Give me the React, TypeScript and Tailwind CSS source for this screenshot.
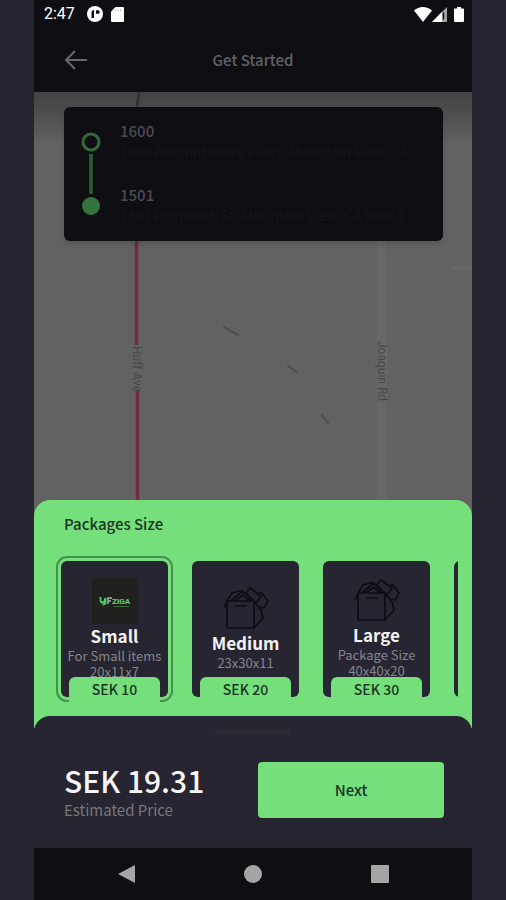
import { useState } from 'react';

interface PackageSize {
  name: string;
  lines: string[];
  price: string;
  logo?: boolean;
}

const PACKAGES: PackageSize[] = [
  { name: 'Small', lines: ['For Small items', '20x11x7'], price: 'SEK 10', logo: true },
  { name: 'Medium', lines: ['23x30x11'], price: 'SEK 20' },
  { name: 'Large', lines: ['Package Size', '40x40x20'], price: 'SEK 30' },
];

function StatusBar() {
  return (
    <div className="flex h-7 items-center justify-between pl-2.5 pr-2 text-white">
      <div className="flex items-center gap-3">
        <span className="font-[Roboto] text-base">2:47</span>
        <svg width="16" height="16" viewBox="0 0 16 16">
          <circle cx="8" cy="8" r="8" fill="#fff" />
          <path d="M4.5 12V6.5A2.5 2.5 0 0 1 7 4v8zM9 4.2h2a1.7 1.7 0 0 1 0 3.6H9z" fill="#0f0e13" />
        </svg>
        <svg width="13" height="15" viewBox="0 0 13 15" className="-ml-1">
          <path d="M4.5 0H12a1 1 0 0 1 1 1v13a1 1 0 0 1-1 1H1a1 1 0 0 1-1-1V4.5z" fill="#fff" />
          <path d="M4.5 2v2.5M7 2v2.5M9.5 2v2.5" stroke="#ccc" />
        </svg>
      </div>
      <div className="flex items-center">
        <svg width="18" height="15" viewBox="0 0 18 15">
          <path d="M0 3.6C5-1.2 13-1.2 18 3.6L9 15z" fill="#fff" />
        </svg>
        <svg width="16" height="15" viewBox="0 0 16 15">
          <path d="M0 15 15 0v15z" fill="#a5a5a8" />
          <path d="M0 15 10 5v10z" fill="#fff" />
          <path d="M11.5 5.5v7" stroke="#0f0e13" strokeWidth="1.5" />
        </svg>
        <svg width="10" height="15" viewBox="0 0 10 15" className="ml-1.5">
          <path d="M3 0h4v1.5h2a1 1 0 0 1 1 1V14a1 1 0 0 1-1 1H1a1 1 0 0 1-1-1V2.5a1 1 0 0 1 1-1h2z" fill="#fff" />
        </svg>
      </div>
    </div>
  );
}

function MapDrawing() {
  return (
    <svg className="absolute inset-0 h-full w-full" viewBox="0 0 438 424" preserveAspectRatio="xMidYMin slice">
      <defs>
        <linearGradient id="headerShadow" x1="0" y1="0" x2="0" y2="1">
          <stop offset="0" stopColor="#434345" />
          <stop offset="0.35" stopColor="#4c4c4d" />
          <stop offset="1" stopColor="#626262" />
        </linearGradient>
      </defs>
      <rect width="438" height="424" fill="#626262" />
      <path d="M348 0v424" stroke="#676767" strokeWidth="10" />
      <path d="M418 176h20" stroke="#686868" strokeWidth="3" />
      <rect width="438" height="52" fill="url(#headerShadow)" />
      <path d="M105 0l-2 15" stroke="#343436" strokeWidth="3" />
      <path d="M102.500 140V253M103.500 298V424" stroke="#712c3e" strokeWidth="3.500" />
      <path d="M190 235l14 8M254 274l9 6M288 323l6 8" stroke="#4d4d4d" strokeWidth="2" strokeLinecap="round" />
      <text transform="translate(99 254) rotate(90)" fontFamily="Roboto" fontSize="12" fill="#484848">
        Huff Ave
      </text>
      <text transform="translate(344 249) rotate(90)" fontFamily="Roboto" fontSize="12" fill="#484848">
        Joaquin Rd
      </text>
    </svg>
  );
}

function RouteCard() {
  return (
    <div className="relative mr-[29px] ml-[30px] mt-[15px] flex h-[134px] gap-[19px] rounded-md bg-[#0f0e13] pl-[17px] shadow-md">
      <svg width="20" height="86" viewBox="0 0 20 86" className="mt-6 shrink-0">
        <circle cx="10" cy="11" r="8" fill="none" stroke="#34693c" strokeWidth="3" />
        <path d="M10 23v40" stroke="#2c6034" strokeWidth="3.500" />
        <circle cx="10" cy="75" r="9" fill="#34743c" />
      </svg>
      <div className="flex min-w-0 flex-col gap-6 pt-3.5 text-sm leading-5">
        <div>
          <p className="text-[15px] font-medium leading-5 text-[#4c4c4f]">1600</p>
          <p className="truncate text-[#16161a]">1600 Amphitheatre Pkwy, Mountain View, CA</p>
        </div>
        <div>
          <p className="text-[15px] font-medium leading-5 text-[#4c4c4f]">1501</p>
          <p className="truncate text-[#16161a]">1501 Plymouth St, Mountain View, CA 94043</p>
        </div>
      </div>
    </div>
  );
}

function BoxIcon() {
  return (
    <svg width="46" height="44" viewBox="0 0 46 44" fill="none" stroke="#0f0e14" strokeWidth="1.700" strokeLinejoin="round" strokeLinecap="round">
      <path d="M4 14h27v27H6a2 2 0 0 1-2-2z" />
      <path d="M31 14l7 9 2 8-9 10M4 14l-3 7M4 14l5-8 7-2" />
      <path d="M9 13l11-9 8 10M16 4l4 0M13 13l7-5 6 6" />
      <path d="M23 6l4-5 11 8-5 7z" />
      <path d="M36 6h3l6 8-4 7-4-1" />
      <path d="M13 19h10" />
    </svg>
  );
}

function CompanyLogo() {
  return (
    <div className="flex h-[46px] w-[46px] items-center justify-center bg-[#20211f]">
      <svg width="32" height="14" viewBox="0 0 32 14">
        <path d="M1.500 3v3.500q0 2 2 2 2 0 2.500-3V4M6.500 4v5q-1 2-3 1.500" fill="none" stroke="#55c763" strokeWidth="1.800" />
        <path d="M9 10V4h4M9 7h3" fill="none" stroke="#a9adb0" strokeWidth="1.500" />
        <text x="13" y="10" fontFamily="Roboto" fontSize="8" fontWeight="900" fill="#55c763">ZIGA</text>
        <path d="M15 12.500h15" stroke="#35703b" />
      </svg>
    </div>
  );
}

function PackageCard({ item, selected, onSelect }: { item: PackageSize; selected: boolean; onSelect: () => void }) {
  return (
    <button
      type="button"
      aria-pressed={selected}
      onClick={onSelect}
      className={`relative h-[136px] w-[107px] shrink-0 rounded-md bg-[#262531] ${selected ? 'outline-2 outline-offset-3 outline-[#459150]' : ''}`}
    >
      <span className="flex h-full flex-col items-center justify-center">
        {item.logo ? <CompanyLogo /> : <BoxIcon />}
        <span className="text-[17px] font-bold leading-6 text-[#f3f3f5]">{item.name}</span>
        {item.lines.map((line) => (
          <span key={line} className="whitespace-nowrap text-[13px] leading-4 text-[#85858c]">{line}</span>
        ))}
      </span>
      <span className="absolute inset-x-2 -bottom-1.5 h-[26px] rounded-t-md bg-[#74df7b] pt-0.5 text-sm font-medium leading-5 text-[#1d3527]">
        {item.price}
      </span>
    </button>
  );
}

export default function App() {
  const [selected, setSelected] = useState('Small');

  return (
    <div className="min-h-screen bg-[#262531] px-[34px] font-['Noto_Sans_CJK_JP','Noto_Sans',sans-serif]">
      <div className="flex min-h-screen flex-col">
        <header className="bg-[#0f0e13]">
          <StatusBar />
          <div className="relative flex h-16 items-center justify-center">
            <button type="button" aria-label="Back" className="absolute left-[30px]">
              <svg width="24" height="20" viewBox="0 0 24 20" fill="none" stroke="#68686b" strokeWidth="2">
                <path d="M23 10H2M11 1L2 10l9 9" />
              </svg>
            </button>
            <h1 className="text-[15px] font-medium leading-6 text-[#626265]">Get Started</h1>
          </div>
        </header>

        <main className="relative flex-1 overflow-hidden bg-[#626262]">
          <MapDrawing />
          <RouteCard />
        </main>

        <div className="relative -mt-4 rounded-t-2xl bg-[#74df7b]">
          <section className="pb-[13px] pt-3">
            <h2 className="pl-[30px] text-[15px] font-medium leading-6 text-[#1d3527]">Packages Size</h2>
            <div className="mr-3.5 mt-4 flex gap-6 overflow-hidden pb-1.5 pl-[27px] pt-[9px]">
              {PACKAGES.map((item) => (
                <PackageCard
                  key={item.name}
                  item={item}
                  selected={selected === item.name}
                  onSelect={() => setSelected(item.name)}
                />
              ))}
              <div className="h-[136px] w-[107px] shrink-0 rounded-md bg-[#262531]" />
            </div>
          </section>
        </div>

        <div className="bg-[linear-gradient(#74df7b_12px,#262531_12px)]">
          <section className="rounded-t-2xl bg-[#262531] pb-[26px] pt-3.5">
            <div className="mx-auto h-1 w-[76px] rounded-full bg-[#2c2c34]" />
            <div className="flex items-start gap-4 pl-[30px] pr-7 pt-7">
              <div className="flex-1">
                <p className="text-[30px] font-medium leading-9 text-[#f6f6f8]">SEK 19.31</p>
                <p className="text-[15px] leading-6 text-[#77777e]">Estimated Price</p>
              </div>
              <button type="button" className="h-14 w-[186px] rounded-sm bg-[#74df7b] text-[15px] font-medium text-[#1d3527]">
                Next
              </button>
            </div>
          </section>
        </div>

        <nav className="flex h-[52px] items-center justify-around bg-[#0f0e13] px-7">
          <button type="button" aria-label="Back">
            <svg width="18" height="20" viewBox="0 0 18 20"><path d="M1 10L18 1v18z" fill="#a5a5a5" /></svg>
          </button>
          <button type="button" aria-label="Home">
            <svg width="18" height="18" viewBox="0 0 18 18"><circle cx="9" cy="9" r="9" fill="#a5a5a5" /></svg>
          </button>
          <button type="button" aria-label="Recent apps">
            <svg width="18" height="18" viewBox="0 0 18 18"><rect width="18" height="18" rx="1" fill="#a5a5a5" /></svg>
          </button>
        </nav>
      </div>
    </div>
  );
}
